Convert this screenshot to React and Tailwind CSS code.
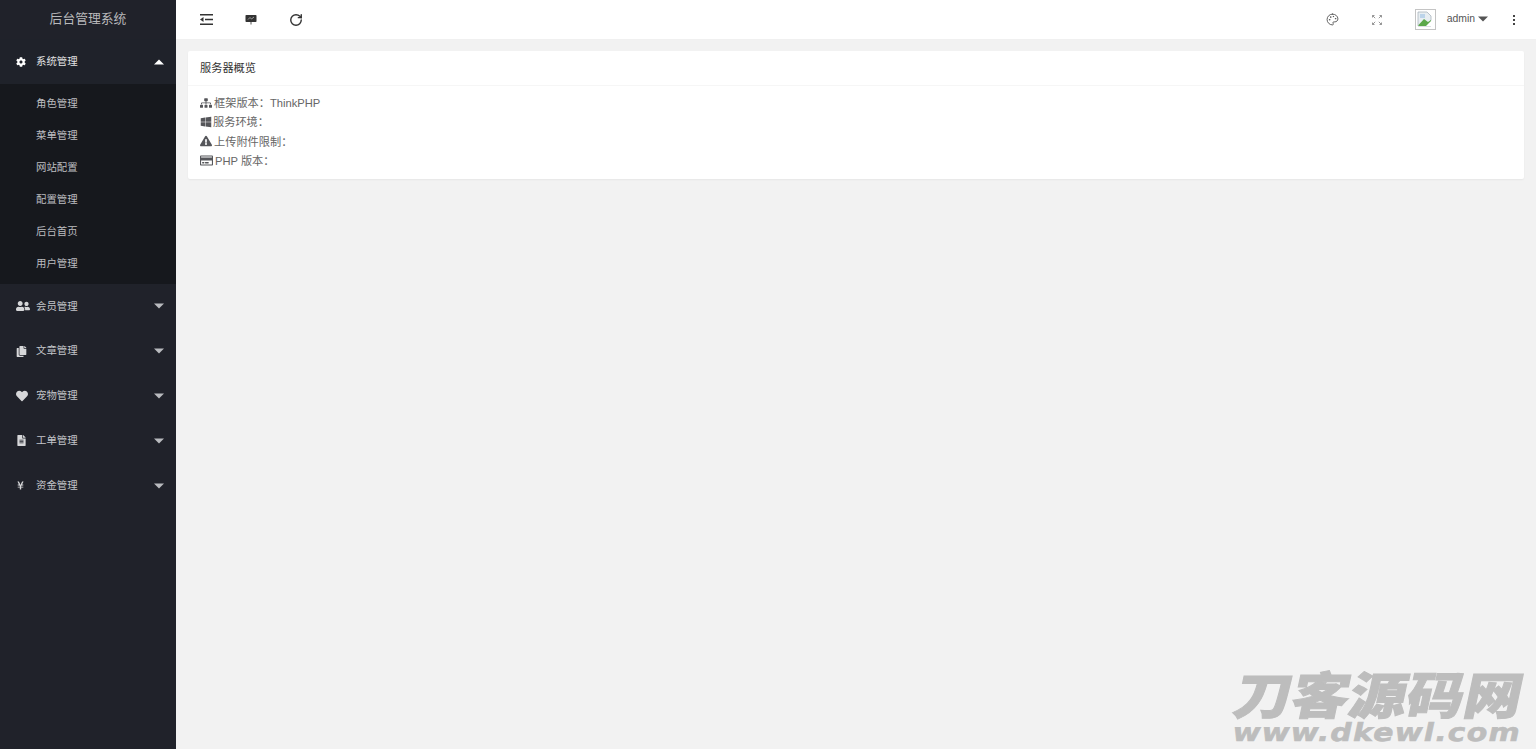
import React from "react";
import { FaCog, FaUserFriends, FaCopy, FaHeart, FaFileAlt, FaYenSign, FaSitemap, FaWindows, FaExclamationTriangle, FaRegCreditCard } from "react-icons/fa";
import { LuRotateCw, LuPalette } from "react-icons/lu";

const font = { fontFamily: '"Liberation Sans", "Noto Sans CJK SC", sans-serif' };

function Caret({ up, className = "" }) {
  return (
    <svg width="10" height="6" viewBox="0 0 10 6" className={className}>
      <path d={up ? "M0 5.5L5 0.5L10 5.5Z" : "M0 0.5L5 5.5L10 0.5Z"} fill="currentColor" />
    </svg>
  );
}

function Menu({ icon, label, iconClass = "text-[11px]" }) {
  return (
    <div className="h-[44.8px] flex items-center pl-4 pr-[12px] text-[10.4px] text-[#c3c5c9]">
      <span className={`w-[20px] flex items-center text-[#d6d7d9] ${iconClass}`}>{icon}</span>
      <span className="flex-1">{label}</span>
      <Caret className="text-[#b9bbbf]" />
    </div>
  );
}

function Info({ icon, text, gap = "gap-[2px]" }) {
  return (
    <div className={`h-[19.2px] flex items-center ${gap}`}>
      <span className="text-[#55565a] flex items-center text-[12px] -translate-y-[1px]">{icon}</span>
      <span>{text}</span>
    </div>
  );
}

export default function App() {
  const subs = ["角色管理", "菜单管理", "网站配置", "配置管理", "后台首页", "用户管理"];
  return (
    <div className="h-screen w-full flex overflow-hidden bg-[#f2f2f2] relative" style={font}>
      <aside className="w-[176px] shrink-0 bg-[#20222a] flex flex-col">
        <div className="h-[39px] pb-[1px] flex items-center justify-center text-[12.8px] text-[#b8b9bb]">后台管理系统</div>
        <div className="h-[45px] flex items-center pl-4 pr-[12px] text-[10.4px] text-[#e2e3e4] bg-[#1f222a]">
          <span className="w-[20px] flex items-center text-[10px] text-white"><FaCog /></span>
          <span className="flex-1">系统管理</span>
          <Caret up className="text-white" />
        </div>
        <div className="bg-[#16181d] pt-[4px] pb-[4px]">
          {subs.map((s) => (
            <div key={s} className="h-[32px] flex items-center pl-9 text-[10.4px] text-[#bcbdc0]">{s}</div>
          ))}
        </div>
        <Menu icon={<FaUserFriends />} iconClass="text-[14px]" label="会员管理" />
        <Menu icon={<FaCopy />} label="文章管理" />
        <Menu icon={<FaHeart />} iconClass="text-[12px]" label="宠物管理" />
        <Menu icon={<FaFileAlt />} label="工单管理" />
        <Menu icon={<FaYenSign />} iconClass="text-[9px]" label="资金管理" />
      </aside>
      <main className="flex-1 flex flex-col min-w-0">
        <header className="h-[40px] bg-white flex items-center shrink-0 border-b border-[#f0f0f0] text-[#333]">
          <div className="w-[60px] flex justify-center">
            <svg width="13" height="11" viewBox="0 0 13 11" fill="none">
              <path d="M0 .75H13M5 5.5H13M0 10.25H13" stroke="#333" strokeWidth="1.3" />
              <path d="M0 5.5L3.5 3V8Z" fill="#333" />
            </svg>
          </div>
          <div className="w-[30px] flex justify-center">
            <svg width="12" height="11" viewBox="0 0 12 11">
              <rect x="0.5" y="1" width="11" height="7" rx="0.8" fill="#333" />
              <path d="M3 5.5L5 3.5L6.5 5L9 3" stroke="#bbb" strokeWidth="0.8" fill="none" />
              <path d="M6 8V10.5" stroke="#555" strokeWidth="1" />
            </svg>
          </div>
          <div className="w-[60px] flex justify-center">
            <LuRotateCw size={14} strokeWidth={2.4} />
          </div>
          <div className="flex-1" />
          <div className="w-[45px] flex justify-center">
            <LuPalette size={13} strokeWidth={1.7} className="text-[#555]" />
          </div>
          <div className="w-[45px] flex justify-center">
            <svg width="10" height="10" viewBox="0 0 10 10" fill="none" stroke="#8a8a8a" strokeWidth="0.9">
              <path d="M.5 2.5V.5H2.5M7.5 .5H9.5V2.5M9.5 7.5V9.5H7.5M2.5 9.5H.5V7.5M.5 .5L3.2 3.2M9.5 .5L6.8 3.2M9.5 9.5L6.8 6.8M.5 9.5L3.2 6.8" />
            </svg>
          </div>
          <div className="ml-[15px] w-[21px] h-[21px] border border-[#c4c4c4] flex items-start bg-white p-[1px]">
            <svg width="16" height="16" viewBox="0 0 16 16">
              <path d="M1 1H10L14 5V15H1Z" fill="#e8eef2" stroke="#a9b4bc" strokeWidth="0.8" />
              <path d="M1.5 14L7 8L11 11L14 9V15H1.5Z" fill="#5ba84a" />
              <path d="M3 3H8V7H3Z" fill="#bcd4ea" />
              <path d="M9 15L15 9V15Z" fill="#fff" />
            </svg>
          </div>
          <span className="ml-[11px] text-[10.4px] text-[#555] -translate-y-[1px]">admin</span>
          <Caret className="ml-[3px] text-[#555] -translate-y-[1px]" />
          <div className="ml-[25px] mr-[21px] flex flex-col gap-[2px]">
            <i className="block w-[2px] h-[2px] bg-[#444]" />
            <i className="block w-[2px] h-[2px] bg-[#444]" />
            <i className="block w-[2px] h-[2px] bg-[#444]" />
          </div>
        </header>
        <div className="p-[12px] pt-[11px]">
          <section className="bg-white rounded-[2px] shadow-[0_1px_2px_rgba(0,0,0,0.05)]">
            <div className="h-[35px] pt-[1px] flex items-center px-[12px] text-[11.2px] text-[#333] border-b border-[#f6f6f6]">服务器概览</div>
            <div className="px-[12px] pt-[8px] pb-[8px] text-[11.2px] text-[#666]">
              <Info icon={<FaSitemap />} text="框架版本：ThinkPHP" />
              <Info icon={<FaWindows />} gap="gap-[1px]" text="服务环境：" />
              <Info icon={<FaExclamationTriangle />} text="上传附件限制：" />
              <Info icon={<FaRegCreditCard size={13} />} text="PHP 版本：" />
            </div>
          </section>
        </div>
      </main>
      <div className="absolute left-[1236px] top-[660px] w-[290px] text-[#bdbdbd] pointer-events-none select-none">
        <div className="text-[50px] leading-[64px] font-black whitespace-nowrap origin-left [transform:skewX(-12deg)_scaleX(1.15)] [-webkit-text-stroke:1px_#bdbdbd]" style={{ fontFamily: '"Noto Sans CJK SC", sans-serif' }}>刀客源码网</div>
        <div className="text-[25px] leading-[24px] font-bold whitespace-nowrap origin-left mt-[-3px] ml-[-3px] [transform:skewX(-12deg)_scaleX(1.2)] [-webkit-text-stroke:0.6px_#bdbdbd]" style={{ fontFamily: '"DejaVu Sans", sans-serif', letterSpacing: "1px" }}>www.dkewl.com</div>
      </div>
    </div>
  );
}
